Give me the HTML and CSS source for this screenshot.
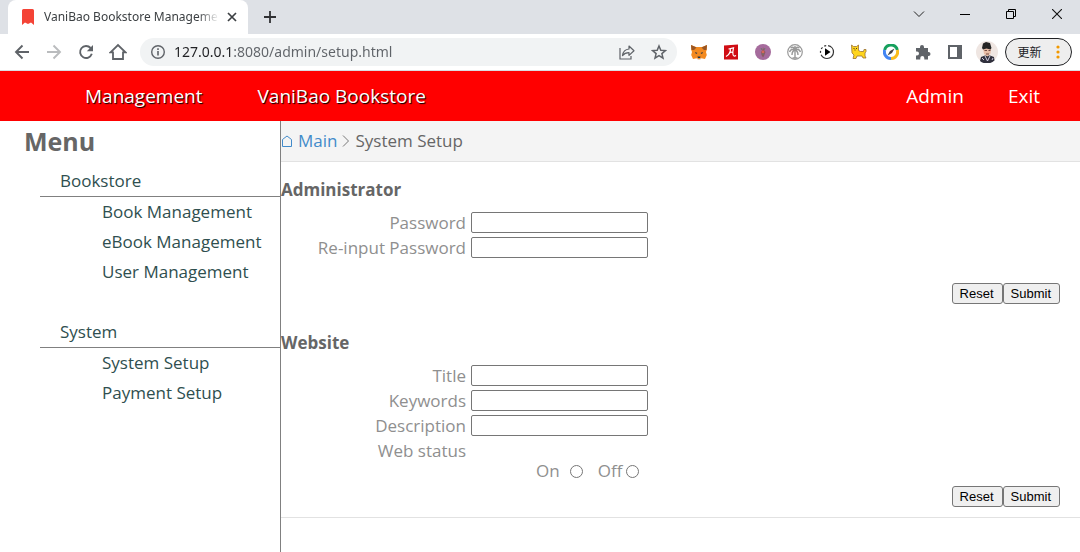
FILE: index.html
```html
<!DOCTYPE html>
<html lang="en">
<head>
<meta charset="utf-8">
<meta name="viewport" content="width=device-width, initial-scale=1">
<title>VaniBao Bookstore Management</title>
<link rel="stylesheet" href="styles.css">
</head>
<body>
<div class="browser">
  <div class="tabstrip">
    <div class="tab">
      <svg class="tab-icon" width="12" height="16" viewBox="0 0 12 16"><path d="M0 1.500Q0 0 1.500 0h9Q12 0 12 1.500V16L9 13.500 6 15 3 13.500 0 16z" fill="#f44336"/></svg>
      <span class="tab-title">VaniBao Bookstore Manageme</span>
      <button class="tab-close" type="button" aria-label="Close tab"><svg width="10" height="10" viewBox="0 0 10 10"><path d="M1 1l8 8M9 1L1 9" stroke="#3c4043" stroke-width="1.700"/></svg></button>
    </div>
    <button class="new-tab" type="button" aria-label="New tab"><svg width="12" height="12" viewBox="0 0 12 12"><path d="M6 0v12M0 6h12" stroke="#303134" stroke-width="1.800"/></svg></button>
    <div class="window-controls">
      <button type="button" aria-label="Search tabs"><svg width="12" height="12" viewBox="0 0 12 12"><path d="M1 3.500l5 5 5-5" fill="none" stroke="#222"/></svg></button>
      <button type="button" aria-label="Minimize"><svg width="10" height="10" viewBox="0 0 10 10"><path d="M0 5.500h10" stroke="#000"/></svg></button>
      <button type="button" aria-label="Restore"><svg width="10" height="10" viewBox="0 0 10 10"><path d="M.5 2.500h7v7h-7zM2.500 2.500v-2h7v7h-2" fill="none" stroke="#000"/></svg></button>
      <button type="button" aria-label="Close"><svg width="10" height="10" viewBox="0 0 10 10"><path d="M0 0l10 10M10 0L0 10" stroke="#111" stroke-width="1.100"/></svg></button>
    </div>
  </div>
  <div class="toolbar">
    <button class="tool" type="button" aria-label="Back"><svg width="16" height="16" viewBox="0 0 16 16"><path d="M15 8H2M8.500 1.500L2 8l6.500 6.500" fill="none" stroke="#5f6368" stroke-width="1.900"/></svg></button>
    <button class="tool" type="button" aria-label="Forward"><svg width="16" height="16" viewBox="0 0 16 16"><path d="M1 8h13M7.500 1.500L14 8l-6.500 6.500" fill="none" stroke="#babcbe" stroke-width="1.900"/></svg></button>
    <button class="tool" type="button" aria-label="Reload"><svg width="16" height="16" viewBox="0 0 16 16"><path d="M13.800 9.800A6 6 0 1 1 12.600 4" fill="none" stroke="#5f6368" stroke-width="1.900"/><path d="M15 1v6.200H8.800z" fill="#5f6368"/></svg></button>
    <button class="tool" type="button" aria-label="Home"><svg width="18" height="18" viewBox="0 0 18 18"><path d="M1.500 9.300L9 2l7.500 7.300H14V16H4V9.300z" fill="none" stroke="#5f6368" stroke-width="1.800"/></svg></button>
    <div class="omnibox">
      <svg width="16" height="16" viewBox="0 0 16 16"><circle cx="8" cy="8" r="6.300" fill="none" stroke="#5f6368" stroke-width="1.400"/><path d="M8 7v4.500M8 4.300v1.600" stroke="#5f6368" stroke-width="1.600"/></svg>
      <input class="address" type="text" aria-label="Address" value="127.0.0.1:8080/admin/setup.html">
      <button class="tool" type="button" aria-label="Share"><svg width="16" height="16" viewBox="0 0 16 16"><path d="M1 4v11h11v-3" fill="none" stroke="#5f6368" stroke-width="1.200"/><path d="M3.500 11.500c.6-4.200 3-6.200 6.500-6.500V2l5 4.700-5 4.700V8.700c-2.800 0-4.800.7-6.500 2.800z" fill="none" stroke="#5f6368" stroke-width="1.200" stroke-linejoin="round"/></svg></button>
      <button class="tool" type="button" aria-label="Bookmark"><svg width="16" height="16" viewBox="0 0 16 16"><path d="M8 2l1.800 4.200 4.600.4-3.500 3 1.100 4.500L8 11.700l-4 2.400 1.100-4.500-3.500-3 4.600-.4z" fill="none" stroke="#5f6368" stroke-width="1.500"/></svg></button>
    </div>
    <div class="extensions">
      <button class="tool" type="button" aria-label="Wallet"><svg width="16" height="16" viewBox="0 0 16 16"><path d="M0 1l5 2h6l5-2-.3 5L15 8l.8 3-1.800 4-3.500-.8L8 15.500l-2.500-1.300L2 15l-1.800-4L1 8 .3 6z" fill="#f38a20"/><path d="M0 1l5.500 2.500L3 6H.5zM16 1l-5.500 2.500L13 6h2.500z" fill="#985625"/><path d="M4 8l2.500 1L5 10zM12 8L9.500 9l1.500 1zM6.500 12.500h3L9 14H7z" fill="#233447"/><path d="M5.500 13.500l2.500 2 2.500-2-1 2h-3z" fill="#d7c1b3"/></svg></button>
      <button class="tool" type="button" aria-label="Dictionary"><svg width="16" height="16" viewBox="0 0 16 16"><path d="M1 1.500L15 .5v15H1z" fill="#d00d14"/><path d="M5.500 5l5-1.200Q9.500 8 10 10.500t3 1M7.500 5Q7.500 10 3 12.500M6.500 9q2-1.500 3-.5" fill="none" stroke="#fff" stroke-width="1.200"/></svg></button>
      <button class="tool" type="button" aria-label="Badge"><svg width="16" height="16" viewBox="0 0 16 16"><circle cx="8" cy="8" r="8" fill="#a56b9c"/><path d="M8 3l1 3 1.500 2L9 12l-1 1.500L6.500 11 6 8l1.500-2z" fill="#8c5862"/><circle cx="8" cy="8" r="1.400" fill="#d4665a"/><path d="M6 4l1 2M10 4L9 6M7 10h2" stroke="#6b7869"/></svg></button>
      <button class="tool" type="button" aria-label="Palm"><svg width="16" height="16" viewBox="0 0 16 16"><circle cx="8" cy="8" r="7.300" fill="#fff" stroke="#999" stroke-width="1.200"/><path d="M8 5v9M8 5Q6 2 3.500 4M8 5q2-3 4.500-1M8 5.500Q4 4.500 2.500 8M8 5.500q4-1 5.500 2.500M8 6Q5 7 5 11M8 6q3 1 3 5M8 5V2M5.500 14h5" fill="none" stroke="#999" stroke-width="1.400"/></svg></button>
      <button class="tool" type="button" aria-label="Player"><svg width="16" height="16" viewBox="0 0 16 16"><circle cx="8" cy="8" r="6.500" fill="none" stroke="#333" stroke-width="1.200" stroke-dasharray="17 2 2 2 2 2 2 2"/><path d="M6 4.300L11.500 8 6 11.700z" fill="#000"/></svg></button>
      <button class="tool" type="button" aria-label="Cat"><svg width="16" height="16" viewBox="0 0 16 16"><path d="M.5 1l2 1.500h3L7.500 1v5.500l2 1h3l.5-2h2v2L14 9v3l1 2h-3l-1-2H6l-1 2.500H2L3 11 1 9z" fill="#ffd51c" stroke="#9a7134" stroke-width=".8"/><path d="M2.500 4.500h1M5 4.500h1M3.500 6h1" stroke="#513b16"/></svg></button>
      <button class="tool" type="button" aria-label="Compass"><svg width="16" height="16" viewBox="0 0 16 16"><g fill="none" stroke-width="3"><path d="M1.700 6A6.500 6.500 0 0 1 14.300 6" stroke="#16a05d"/><path d="M1.700 6A6.500 6.500 0 0 0 8 14.500" stroke="#4285f4"/><path d="M14.300 6A6.500 6.500 0 0 1 8 14.500" stroke="#fbbc1a"/></g><path d="M11.500 4.500L9 9l-4.500 2.500L7 7z" fill="#444"/></svg></button>
      <button class="tool" type="button" aria-label="Extensions"><svg width="16" height="16" viewBox="0 0 16 16"><path d="M1 4h4V3a2 2 0 0 1 4 0v1h4v4h.5a2 2 0 0 1 0 4H13v3.500H9.300V14a2 2 0 0 0-4 0v1.500H1v-4h1a2 2 0 0 0 0-4H1z" fill="#5f6368"/></svg></button>
      <button class="tool" type="button" aria-label="Side panel"><svg width="14" height="14" viewBox="0 0 14 14"><path d="M1 1h12v12H1z" fill="#fff" stroke="#5f6368" stroke-width="2"/><path d="M9 0h5v14H9z" fill="#5f6368"/></svg></button>
      <button class="tool" type="button" aria-label="Profile"><svg width="22" height="22" viewBox="0 0 22 22"><circle cx="11" cy="11" r="11" fill="#efe6e2"/><path d="M4 20l1-4 4-1.500h5l4 1.500.5 3.500a11 11 0 0 1-14.500.5z" fill="#30303d"/><path d="M7 7h8l-.5 5.500-3 3L8 13z" fill="#e8bda7"/><path d="M6 7l1-4.500L10 1l4 1 1.500 5-1 1.500-4-1-3.500 1z" fill="#252525"/><path d="M8.500 9.500H11M12.500 9.500h2M10 13h3" stroke="#744b43"/><path d="M9 15l2.500 5 2.500-5M6 17l2 2M17 17l-1 2" fill="none" stroke="#d2cce0"/></svg></button>
    </div>
    <button class="update" type="button"><span>更新</span><svg width="4" height="14" viewBox="0 0 4 14"><g fill="#f29900"><circle cx="2" cy="2" r="1.600"/><circle cx="2" cy="7" r="1.600"/><circle cx="2" cy="12" r="1.600"/></g></svg></button>
  </div>
</div>

<header class="header">
  <nav class="brand"><a href="#">Management</a><a href="#">VaniBao Bookstore</a></nav>
  <nav class="account"><a href="#">Admin</a><a href="#">Exit</a></nav>
</header>

<div class="page">
  <aside class="sidebar">
    <h1>Menu</h1>
    <nav class="menu">
      <section class="menu-group">
        <h2>Bookstore</h2>
        <a href="#">Book Management</a>
        <a href="#">eBook Management</a>
        <a href="#">User Management</a>
      </section>
      <section class="menu-group">
        <h2>System</h2>
        <a href="#">System Setup</a>
        <a href="#">Payment Setup</a>
      </section>
    </nav>
  </aside>
  <main class="content">
    <nav class="breadcrumb" aria-label="Breadcrumb">
      <a href="#"><svg width="12" height="12" viewBox="0 0 12 12"><path d="M1.500 11.500V4.500L6 1l4.500 3.500v7z" fill="none" stroke="#428bca"/></svg>Main</a>
      <svg width="8" height="12" viewBox="0 0 8 12"><path d="M1 .5L6.500 6 1 11.500" fill="none" stroke="#777"/></svg>
      <span>System Setup</span>
    </nav>
    <form class="settings">
      <h2>Administrator</h2>
      <div class="field"><label for="password">Password</label><input id="password" type="password"></div>
      <div class="field"><label for="password2">Re-input Password</label><input id="password2" type="password"></div>
      <div class="actions actions-spaced"><button type="reset">Reset</button><button type="submit">Submit</button></div>
    </form>
    <form class="settings settings-website">
      <h2>Website</h2>
      <div class="field"><label for="title">Title</label><input id="title" type="text"></div>
      <div class="field"><label for="keywords">Keywords</label><input id="keywords" type="text"></div>
      <div class="field"><label for="description">Description</label><input id="description" type="text"></div>
      <div class="field"><span class="field-name" id="status">Web status</span></div>
      <div class="status" role="radiogroup" aria-labelledby="status">
        <label class="status-on" for="on">On</label><input id="on" type="radio" name="status">
        <label class="status-off" for="off">Off</label><input id="off" type="radio" name="status">
      </div>
      <div class="actions"><button type="reset">Reset</button><button type="submit">Submit</button></div>
    </form>
  </main>
</div>
</body>
</html>
```
FILE: styles.css
```css
* { box-sizing: border-box; }

body {
  display: flex;
  flex-direction: column;
  min-height: 100vh;
  margin: 0;
  background: #fff;
  color: #666;
  font: 17px/24px "Open Sans", "Noto Sans", "Noto Sans CJK SC", sans-serif;
}

a { color: inherit; text-decoration: none; }
h1, h2 { margin: 0; }
svg { display: block; flex: none; }

/* Browser bar */
.browser { border-bottom: 1px solid #dadce0; }
.browser button {
  display: flex;
  align-items: center;
  justify-content: center;
  padding: 0;
  border: 0;
  background: none;
}
.tabstrip { display: flex; height: 34px; padding-left: 8px; background: #dee1e6; }
.tab {
  display: flex;
  align-items: center;
  width: 240px;
  padding: 0 8px 0 14px;
  border-radius: 8px 8px 0 0;
  background: #fff;
}
.tab-title {
  flex: 1;
  min-width: 0;
  margin-left: 10px;
  color: #3c4043;
  font-family: "Noto Sans", sans-serif;
  font-size: 12px;
  white-space: nowrap;
  mask-image: linear-gradient(to right, #000 88%, transparent);
}
.browser .tab-close { width: 16px; height: 16px; margin-left: 5px; }
.browser .new-tab { width: 28px; height: 34px; margin-left: 8px; }
.window-controls { display: flex; height: 28px; margin-left: auto; }
.window-controls button { width: 46px; }
.toolbar { display: flex; align-items: center; height: 36px; padding: 0 8px 0 6px; }
.browser .tool { width: 32px; height: 28px; flex: none; }
.omnibox {
  display: flex;
  flex: 1;
  align-items: center;
  min-width: 0;
  height: 28px;
  margin: 0 6px;
  padding: 0 2px 0 10px;
  border-radius: 14px;
  background: #f1f3f4;
}
.address {
  flex: 1;
  min-width: 0;
  height: 24px;
  margin-left: 8px;
  padding: 0;
  border: 0;
  outline: 0;
  background: linear-gradient(to right, #202124 58px, #5f6368 58px);
  background-clip: text;
  color: transparent;
  font: 14px/24px "Noto Sans", sans-serif;
}
.extensions { display: flex; }
.browser .update {
  gap: 14px;
  width: 67px;
  height: 28px;
  margin-left: 2px;
  border: 1px solid #202124;
  border-radius: 14px;
  background: #eee;
  color: #202124;
  font: 12px/16px "Noto Sans CJK SC", sans-serif;
}

/* Site header */
.header {
  display: flex;
  justify-content: space-between;
  padding: 10px 40px 10px 85px;
  background: #f00;
  color: #fff;
  font-size: 19px;
  line-height: 30px;
}
.brand { display: flex; gap: 55px; text-shadow: 1px 1px 1px #000; }
.account { display: flex; gap: 44px; }

/* Menu */
.page { display: flex; flex: 1; }
.sidebar { flex: 0 0 281px; border-right: 1px solid #808080; }
.sidebar h1 { padding: 4px 24px; font-size: 25px; line-height: 32px; }
.menu { display: grid; gap: 30px; padding: 5px 0 0 40px; }
.menu-group { display: grid; color: #2f4f4f; line-height: 30px; }
.menu-group h2 {
  padding-left: 20px;
  border-bottom: 1px solid #808080;
  font-size: inherit;
  font-weight: 400;
}
.menu-group a { padding-left: 62px; }

/* Settings */
.content { flex: 1; min-width: 0; }
.breadcrumb {
  display: flex;
  align-items: center;
  gap: 5px;
  height: 41px;
  border-bottom: 1px solid #e2e2e2;
  background: #f4f4f4;
}
.breadcrumb a { display: flex; align-items: center; gap: 5px; color: #428bca; }
.settings { padding-top: 16px; color: #8f8f8f; }
.settings-website { padding-top: 27px; padding-bottom: 10px; border-bottom: 1px solid #e2e2e2; }
.settings h2 { margin-bottom: 8px; color: #666; font-size: 17px; line-height: 24px; }
.field { display: grid; grid-template-columns: 185px 177px; gap: 5px; height: 25px; align-items: center; }
.field label, .field-name { text-align: right; }
.field input { height: 21px; margin: 0; padding: 1px 2px; border: 1px solid #767676; border-radius: 2px; }
.status { display: flex; align-items: center; height: 16px; padding-left: 255px; }
.status input { width: 13px; height: 13px; margin: 0; }
.status-on { margin-right: 10px; }
.status-off { margin: 0 4px 0 15px; }
.actions { display: flex; justify-content: flex-end; margin-top: 7px; padding-right: 20px; }
.actions-spaced { margin-top: 23px; }
.settings-website { margin-top: 0; }
.actions button {
  height: 21px;
  padding: 1px 8px 1px 7px;
  border: 1px solid #767676;
  border-radius: 3px;
  background: #efefef;
  color: #000;
  font: 13px/17px "Liberation Sans", Arial, sans-serif;
}
```
